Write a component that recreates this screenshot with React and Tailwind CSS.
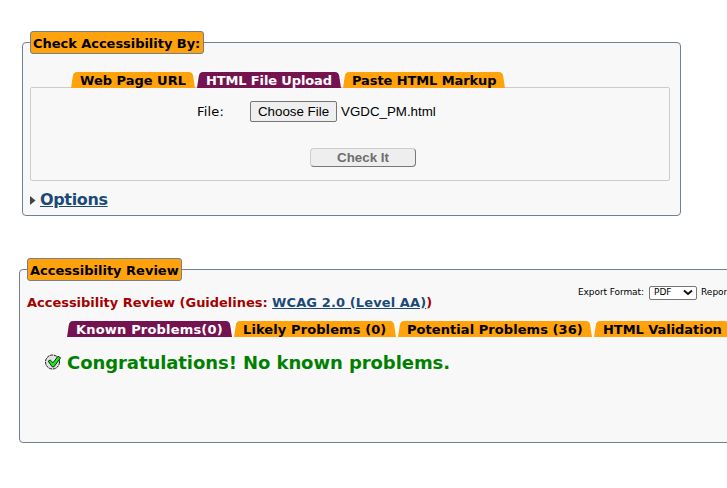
function Tab({ width, active, tracking = "", children }) {
  const fill = active ? "#751350" : "#ffa20c";
  return (
    <div className={`relative flex h-4 shrink-0 bg-white ${width}`}>
      <div className="absolute inset-0 flex">
        <svg className="h-4 w-[6px] shrink-0" viewBox="0 0 6 16" aria-hidden="true">
          <path d="M0 16L1.8 4Q2.5 0 6 0V16Z" fill={fill} />
        </svg>
        <div className={`h-4 grow ${active ? "bg-[#751350]" : "bg-[#ffa20c]"}`} />
        <svg className="h-4 w-[6px] shrink-0" viewBox="0 0 6 16" aria-hidden="true">
          <path d="M6 16L4.2 4Q3.5 0 0 0V16Z" fill={fill} />
        </svg>
      </div>
      <span className={`relative block pl-[9px] text-[13px] leading-[17px] font-bold ${tracking} ${active ? "text-white" : "text-black"}`}>
        {children}
      </span>
    </div>
  );
}

function Legend({ className, children }) {
  return (
    <h2 className={`h-[23px] rounded-[3px] border border-[#708090] bg-[#ffa20c] pl-[2px] text-[13px] leading-[23px] font-bold ${className}`}>
      {children}
    </h2>
  );
}

function CheckPanel() {
  return (
    <section className="mt-[42px] ml-[22px] flex h-[174px] w-[659px] shrink-0 flex-col rounded-[4px] border border-[#708090] bg-[#f8f8f8]">
      <Legend className="-mt-[12px] ml-[7px] w-[174px] tracking-[-0.04px]">Check Accessibility By:</Legend>
      <div className="z-10 mt-[18px] ml-12 flex gap-[2px]">
        <Tab width="w-[124px]">Web Page URL</Tab>
        <Tab width="w-[144px]" tracking="tracking-[-0.13px]" active>HTML File Upload</Tab>
        <Tab width="w-[162px]" tracking="tracking-[-0.1px]">Paste HTML Markup</Tab>
      </div>
      <div className="-mt-px ml-[7px] h-[94px] w-[640px] rounded-[2px] border border-[#cccccc]">
        <div className="mt-[13px] ml-[166px] flex h-[21px] items-center text-[13px]">
          <span className="w-[53px] tracking-[0.2px]">File:</span>
          <button className="h-[21px] w-[87px] rounded-[2px] border border-[#767676] bg-[#efefef] font-['Liberation_Sans',sans-serif] text-[13.33px] leading-[19px]">Choose File</button>
          <span className="ml-1 font-['Liberation_Sans',sans-serif] text-[13.33px]">VGDC_PM.html</span>
        </div>
        <button className="mt-[26px] ml-[279px] block h-[19px] w-[106px] rounded-[4px] border border-t-[#cccccc] border-r-[#777777] border-b-[#777777] border-l-[#cccccc] bg-[#eeeeee] font-['Liberation_Sans',sans-serif] text-[13.33px] leading-[17px] font-bold text-[#6d6d6d]">Check It</button>
      </div>
      <div className="mt-[8px] ml-[7px] flex h-[22px] items-center">
        <svg width="6" height="9" viewBox="0 0 6 9" aria-hidden="true"><path d="M0 0L5.5 4.5L0 9Z" fill="#444" /></svg>
        <a className="ml-1 text-[16px] leading-[22px] font-bold tracking-[-0.35px] text-[#1b4a78] underline">Options</a>
      </div>
    </section>
  );
}

function SuccessIcon() {
  return (
    <svg width="17" height="16" viewBox="0 0 17 16" aria-hidden="true">
      <circle cx="7.5" cy="8" r="7" fill="#e2e2e2" stroke="#111" strokeWidth="1" strokeDasharray="3 .8" />
      <path d="M3.2 7.2L5.2 6L8 8.8L13 2.2L15.6 3.8L9 12.8H7.2Z" fill="#0cf01a" stroke="#111" strokeWidth=".9" />
    </svg>
  );
}

function ReviewPanel() {
  return (
    <section className="mt-[53px] ml-[19px] flex h-[174px] w-[760px] shrink-0 flex-col rounded-[4px] border border-[#708090] bg-[#f8f8f8]">
      <Legend className="-mt-[12px] ml-[7px] w-[155px]">Accessibility Review</Legend>
      <div className="mt-[4px] ml-[7px] flex h-7">
        <h3 className="w-[551px] pt-[9px] text-[13px] leading-[17px] font-bold tracking-[-0.03px] text-[#a50000]">
          Accessibility Review (Guidelines: <a className="tracking-[0.11px] text-[#1b4a78] underline">WCAG 2.0 (Level AA)</a>)
        </h3>
        <div className="flex h-[14px] items-center pt-px text-[9px] whitespace-nowrap">
          <span className="w-[71px] tracking-[-0.08px]">Export Format:</span>
          <span className="flex h-[14px] w-12 items-center justify-between rounded-[2px] border border-[#767676] bg-white pr-[3px] pl-[4px]">
            PDF
            <svg width="10" height="7" viewBox="0 0 10 7" fill="none" stroke="#111" strokeWidth="2" aria-hidden="true"><path d="M1 1.5L5 5L9 1.5" /></svg>
          </span>
          <span className="ml-[4px]">Report</span>
        </div>
      </div>
      <div className="mt-[8px] ml-[47px] flex gap-[2px]">
        <Tab width="w-[165px]" tracking="tracking-[0.18px]" active>Known Problems(0)</Tab>
        <Tab width="w-[162px]" tracking="tracking-[0.1px]">Likely Problems (0)</Tab>
        <Tab width="w-[194px]" tracking="tracking-[0.06px]">Potential Problems (36)</Tab>
        <Tab width="w-[137px]" tracking="tracking-[-0.05px]">HTML Validation</Tab>
      </div>
      <div className="mt-[13px] ml-[25px] flex h-6 items-center gap-[5px] text-[18px] leading-6 font-bold tracking-[-0.07px] text-[#008000]">
        <SuccessIcon />
        <span className="pt-px">Congratulations! No known problems.</span>
      </div>
    </section>
  );
}

export default function App() {
  return (
    <main className="flex h-[488px] w-[727px] flex-col overflow-hidden bg-white font-['DejaVu_Sans',sans-serif] whitespace-nowrap text-black">
      <CheckPanel />
      <ReviewPanel />
    </main>
  );
}
